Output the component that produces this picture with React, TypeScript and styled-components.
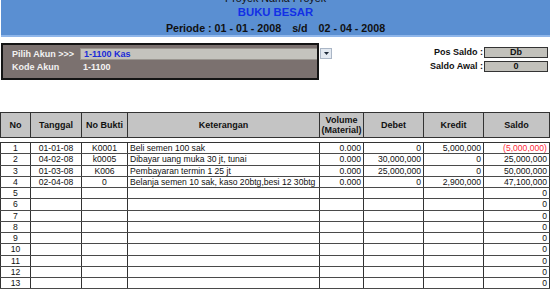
import React from "react";
import styled, { createGlobalStyle } from "styled-components";

const Global = createGlobalStyle`
  html, body { margin: 0; padding: 0; background: #ffffff; }
  body { font-family: "Liberation Sans", Arial, sans-serif; }
  #root { width: 550px; height: 289px; overflow: hidden; }
`;

const Page = styled.div`
  width: 550px;
  height: 289px;
  overflow: hidden;
  background: #fff;
  padding-left: 1px;
  box-sizing: border-box;
`;

const Header = styled.div`
  height: 35px;
  background: #5a8fd2;
  border-bottom: 2px solid #8fb6ea;
  overflow: hidden;
  display: flex;
  flex-direction: column;
  align-items: center;
`;

const ProjectName = styled.div`
  font-size: 10.7px;
  line-height: 12px;
  margin-top: -8px;
  color: #111;
`;

const Title = styled.div`
  font-size: 11.3px;
  font-weight: bold;
  line-height: 12px;
  margin-top: 2px;
  color: #1230e6;
`;

const Period = styled.div`
  display: flex;
  gap: 11px;
  font-size: 10.7px;
  font-weight: bold;
  line-height: 12px;
  margin-top: 4px;
  color: #111;
  white-space: pre;
`;

const AccountRow = styled.div`
  display: flex;
  align-items: flex-start;
  margin-top: 6px;
  height: 69px;
`;

const AccountPanel = styled.div`
  width: 314px;
  height: 30px;
  border: 2px solid #141414;
  background: #7b716f;
  display: grid;
  grid-template-columns: 77px 1fr;
  grid-template-rows: 12px 12px;
  padding-top: 3px;
  row-gap: 1px;
`;

const PanelLabel = styled.div`
  color: #f2f2f2;
  font-size: 9px;
  font-weight: bold;
  line-height: 12px;
  padding-left: 9px;
  white-space: nowrap;
`;

const PanelField = styled.div`
  background: #c4c3bd;
  border: 1px solid #9a9690;
  border-right: none;
  color: #1a2ad8;
  font-size: 9px;
  font-weight: bold;
  line-height: 10px;
  padding-left: 3px;
`;

const PanelValue = styled.div`
  color: #f4f4f4;
  font-size: 9px;
  font-weight: bold;
  line-height: 12px;
  padding-left: 3px;
`;

const DropButton = styled.div`
  width: 10px;
  height: 9px;
  margin-left: 1px;
  margin-top: 5px;
  background: #e3e9f1;
  border: 1px solid #aab6c6;
  display: flex;
  align-items: center;
  justify-content: center;
`;

const Spacer = styled.div`
  flex: 1;
`;

const SaldoGrid = styled.div`
  display: grid;
  grid-template-columns: auto 64px;
  grid-auto-rows: 11px;
  row-gap: 3px;
  margin-top: 4px;
  margin-right: 2px;
`;

const SaldoLabel = styled.div`
  font-size: 9px;
  font-weight: bold;
  color: #111;
  line-height: 11px;
  text-align: right;
  padding-right: 1px;
`;

const SaldoBox = styled.div`
  background: #c2c1bb;
  border: 1px solid #333;
  font-size: 9px;
  font-weight: bold;
  color: #111;
  line-height: 9px;
  text-align: center;
`;

const Table = styled.table`
  border-collapse: collapse;
  table-layout: fixed;
  width: 548px;
  margin-left: -1px;
  font-size: 8.6px;
  color: #111;
`;

const HeadCell = styled.th`
  background: #c4c4c4;
  border: 1px solid #333;
  height: 24px;
  padding: 0;
  font-size: 9px;
  font-weight: bold;
  line-height: 10px;
  text-align: center;
  vertical-align: middle;
`;

const GapCell = styled.td`
  height: 4px;
  padding: 0;
  border-bottom: 1px solid #333;
`;

const Cell = styled.td<{ $align?: "left" | "center" | "right"; $red?: boolean }>`
  border-left: 1px solid #333;
  border-right: 1px solid #333;
  border-bottom: 1px solid #4a4a4a;
  height: 10.25px;
  padding: 0 2px;
  line-height: 10px;
  white-space: nowrap;
  overflow: hidden;
  text-align: ${(p) => p.$align ?? "left"};
  color: ${(p) => (p.$red ? "#ff2a3a" : "#111")};
`;

type Row = {
  no: number;
  tgl?: string;
  bukti?: string;
  ket?: string;
  vol?: string;
  debet?: string;
  kredit?: string;
  saldo: string;
  red?: boolean;
};

const rows: Row[] = [
  { no: 1, tgl: "01-01-08", bukti: "K0001", ket: "Beli semen 100 sak", vol: "0.000", debet: "0", kredit: "5,000,000", saldo: "(5,000,000)", red: true },
  { no: 2, tgl: "04-02-08", bukti: "k0005", ket: "Dibayar uang muka 30 jt, tunai", vol: "0.000", debet: "30,000,000", kredit: "0", saldo: "25,000,000" },
  { no: 3, tgl: "01-03-08", bukti: "K006", ket: "Pembayaran termin 1 25 jt", vol: "0.000", debet: "25,000,000", kredit: "0", saldo: "50,000,000" },
  { no: 4, tgl: "02-04-08", bukti: "0", ket: "Belanja semen 10 sak, kaso 20btg,besi 12 30btg", vol: "0.000", debet: "0", kredit: "2,900,000", saldo: "47,100,000" },
  ...Array.from({ length: 9 }, (_, i) => ({ no: i + 5, saldo: "0" })),
];

const widths = [30, 51, 46, 192, 44, 60, 60, 66];

export default function App() {
  return (
    <>
      <Global />
      <Page>
        <Header>
          <ProjectName>Proyek Nama Proyek</ProjectName>
          <Title>BUKU BESAR</Title>
          <Period>
            <span>Periode : 01 - 01 - 2008</span>
            <span>s/d</span>
            <span>02 - 04 - 2008</span>
          </Period>
        </Header>

        <AccountRow>
          <AccountPanel>
            <PanelLabel>Pilih Akun &gt;&gt;&gt;</PanelLabel>
            <PanelField>1-1100 Kas</PanelField>
            <PanelLabel>Kode Akun</PanelLabel>
            <PanelValue>1-1100</PanelValue>
          </AccountPanel>
          <DropButton>
            <svg width="5" height="3" viewBox="0 0 5 3">
              <path d="M0 0H5L2.5 3Z" fill="#1e2a3a" />
            </svg>
          </DropButton>
          <Spacer />
          <SaldoGrid>
            <SaldoLabel>Pos Saldo :</SaldoLabel>
            <SaldoBox>Db</SaldoBox>
            <SaldoLabel>Saldo Awal :</SaldoLabel>
            <SaldoBox>0</SaldoBox>
          </SaldoGrid>
        </AccountRow>

        <Table>
          <colgroup>
            {widths.map((w, i) => (
              <col key={i} style={{ width: w }} />
            ))}
          </colgroup>
          <thead>
            <tr>
              <HeadCell>No</HeadCell>
              <HeadCell>Tanggal</HeadCell>
              <HeadCell>No Bukti</HeadCell>
              <HeadCell>Keterangan</HeadCell>
              <HeadCell>
                Volume
                <br />
                (Material)
              </HeadCell>
              <HeadCell>Debet</HeadCell>
              <HeadCell>Kredit</HeadCell>
              <HeadCell>Saldo</HeadCell>
            </tr>
          </thead>
          <tbody>
            <tr>
              <GapCell colSpan={8} />
            </tr>
            {rows.map((r) => (
              <tr key={r.no}>
                <Cell $align="center">{r.no}</Cell>
                <Cell $align="center">{r.tgl ?? ""}</Cell>
                <Cell $align="center">{r.bukti ?? ""}</Cell>
                <Cell>{r.ket ?? ""}</Cell>
                <Cell $align="right">{r.vol ?? ""}</Cell>
                <Cell $align="right">{r.debet ?? ""}</Cell>
                <Cell $align="right">{r.kredit ?? ""}</Cell>
                <Cell $align="right" $red={r.red}>
                  {r.saldo}
                </Cell>
              </tr>
            ))}
          </tbody>
        </Table>
      </Page>
    </>
  );
}
